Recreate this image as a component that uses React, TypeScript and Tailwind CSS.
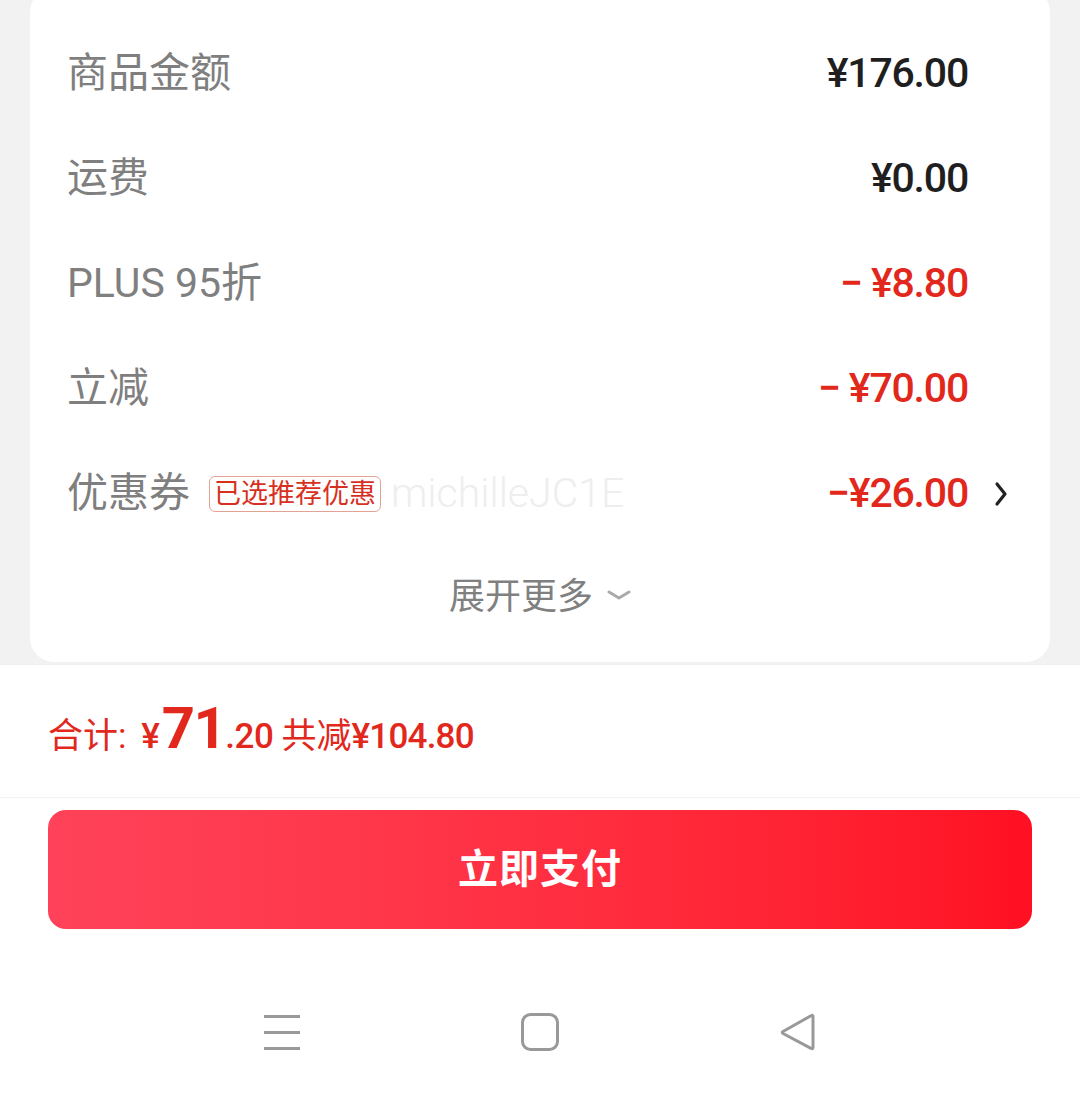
import React from "react";

const rows = [
  { label: "商品金额", value: "¥176.00", red: false },
  { label: "运费", value: "¥0.00", red: false },
  { label: "PLUS 95折", value: "− ¥8.80", red: true },
  { label: "立减", value: "− ¥70.00", red: true },
];

function NavBar() {
  return (
    <div className="flex flex-1 items-start justify-center pt-[83px]">
      <div className="flex w-[258px] justify-center">
        <svg width="40" height="40" viewBox="0 0 40 40" fill="none" stroke="#999" strokeWidth="3">
          <path d="M2 4.5h36M2 20.5h36M2 36.5h36" />
        </svg>
      </div>
      <div className="flex w-[258px] justify-center">
        <svg width="40" height="40" viewBox="0 0 40 40" fill="none" stroke="#999" strokeWidth="3">
          <rect x="2.5" y="2.5" width="35" height="35" rx="8" />
        </svg>
      </div>
      <div className="flex w-[258px] justify-center">
        <svg width="40" height="40" viewBox="0 0 40 40" fill="none" stroke="#999" strokeWidth="3" strokeLinejoin="round">
          <path d="M35 4.5 L35 35.5 Q35 37.5 33 36.3 L5 21.5 Q3.5 20.5 5 19.5 L33 3.7 Q35 2.6 35 4.5 Z" />
        </svg>
      </div>
    </div>
  );
}

export default function App() {
  return (
    <div className="flex h-[1097px] w-[1080px] flex-col overflow-hidden bg-white font-['Roboto','Noto_Sans_CJK_SC',sans-serif]">
      {/* order detail card */}
      <div className="bg-[#f2f2f2] px-[30px] pb-[2px]">
        <div className="mt-[-12px] rounded-[24px] bg-white pl-[37px] pt-[33px]">
          {rows.map((r) => (
            <div key={r.label} className="flex h-[105px] items-center justify-between pr-[82px]">
              <span className="text-[41px] text-[#7f7f7f]">{r.label}</span>
              <span
                className={
                  "text-[41px] font-medium tracking-[-1.2px] " +
                  (r.red ? "text-[#e2281c]" : "text-[#1f1f1f]")
                }
              >
                {r.value}
              </span>
            </div>
          ))}
          <div className="flex h-[105px] items-center pr-[42px]">
            <span className="text-[41px] text-[#7f7f7f]">优惠券</span>
            <span className="ml-[19px] rounded-[6px] border border-[#e2a394] px-[4px] text-[27px] leading-[34px] text-[#d7301f]">
              已选推荐优惠
            </span>
            <span className="ml-[10px] text-[41px] font-light text-[#eeeeee]">michilleJC1E</span>
            <span className="ml-auto text-[41px] font-medium tracking-[-1.2px] text-[#e2281c]">−¥26.00</span>
            <svg className="ml-[26px]" width="14" height="26" viewBox="0 0 14 26" fill="none" stroke="#222" strokeWidth="3.2" strokeLinecap="round" strokeLinejoin="round">
              <path d="M3 3 L11 13 L3 23" />
            </svg>
          </div>
          <div className="flex h-[116px] items-start justify-center pt-[30px] pr-[37px]">
            <span className="text-[36px] leading-[42px] text-[#808080]">展开更多</span>
            <svg className="ml-[14px] mt-[13px]" width="24" height="12" viewBox="0 0 24 12" fill="none" stroke="#aaa" strokeWidth="3" strokeLinecap="round" strokeLinejoin="round">
              <path d="M2 3 L12 9 L22 3" />
            </svg>
          </div>
        </div>
      </div>

      {/* total */}
      <div className="flex h-[133px] items-center border-t border-[#efefef] px-[48px] text-[#e2281c]">
        <span className="flex items-baseline whitespace-pre">
          <span className="text-[35px]">合计: </span>
          <span className="ml-[6px] text-[35px] font-medium">¥</span>
          <span className="ml-[2px] text-[58px] font-bold leading-none tracking-[-1.5px]">71</span>
          <span className="text-[35px] font-medium tracking-[-0.5px]">.20 </span>
          <span className="text-[35px]">共减</span>
          <span className="text-[35px] font-medium tracking-[-0.8px]">¥104.80</span>
        </span>
      </div>

      {/* pay button */}
      <div className="border-t border-[#f2f2f2] px-[48px] pt-[12px]">
        <button className="flex h-[119px] w-full items-center justify-center rounded-[18px] bg-gradient-to-r from-[#ff4259] to-[#ff0f22] text-[40px] font-bold tracking-[1px] text-white">
          立即支付
        </button>
      </div>

      <NavBar />
    </div>
  );
}
